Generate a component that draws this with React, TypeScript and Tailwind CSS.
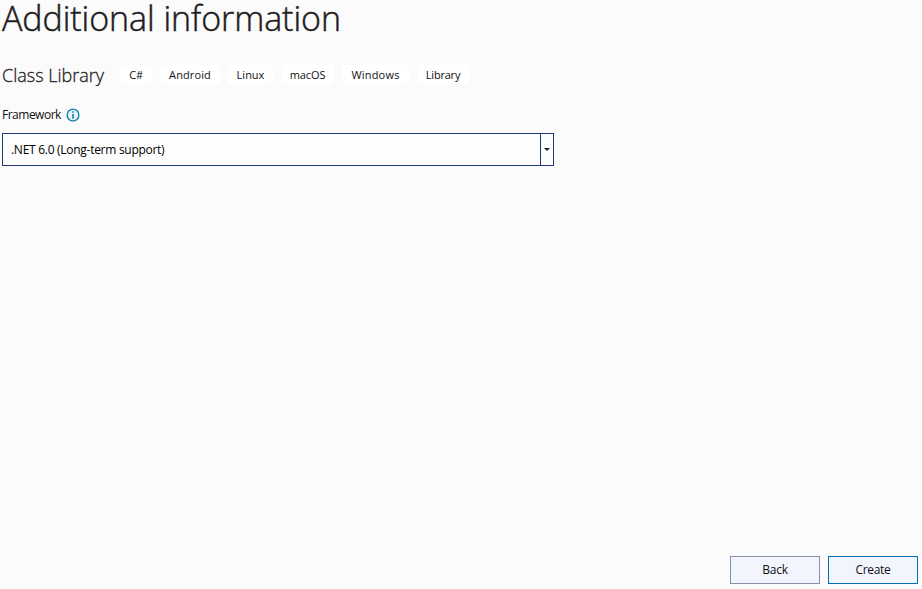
const tags = [
  { label: "C#", size: "w-8", text: "tracking-[-0.2px]" },
  { label: "Android", size: "w-[60px]", text: "tracking-[0.1px]" },
  { label: "Linux", size: "w-[45px]", text: "" },
  { label: "macOS", size: "w-[53px]", text: "tracking-[-0.1px]" },
  { label: "Windows", size: "w-[67px]", text: "tracking-[0.2px]" },
  { label: "Library", size: "w-[52px]", text: "tracking-[-0.2px]" },
];

function InfoIcon() {
  return (
    <svg className="h-[14px] w-[14px]" viewBox="0 0 14 14" fill="none">
      <circle cx="7" cy="7" r="5.9" fill="#e3f3f8" stroke="#1683a8" strokeWidth="1.4" />
      <path d="M6.2 3.3h1.6v1.5H6.2zM6.2 6h1.6v4.8H6.2z" fill="#1683a8" />
    </svg>
  );
}

export default function App() {
  return (
    <main className="flex h-[589px] w-[922px] flex-col bg-[#fbfbfb] font-['Open_Sans','Noto_Sans',sans-serif] text-[11px] text-[#111111]">
      <h1 className="h-[65px] pl-[2px] text-[34px] leading-[36px] font-light tracking-[-0.07px] whitespace-nowrap text-[#1e1e1e] [-webkit-text-stroke:0.5px_#1e1e1e]">
        Additional information
      </h1>
      <div className="flex h-[19px] items-center pl-[2px]">
        <h2 className="w-[118px] pt-[2px] text-[18px] leading-[19px] font-light whitespace-nowrap text-[#1e1e1e] [-webkit-text-stroke:0.3px_#1e1e1e]">Class Library</h2>
        <div className="flex gap-2">
          {tags.map((tag) => (
            <span
              key={tag.label}
              className={`flex h-[19px] items-center justify-center rounded-[3px] bg-white pt-[2px] whitespace-nowrap ${tag.size} ${tag.text}`}
            >
              {tag.label}
            </span>
          ))}
        </div>
      </div>
      <div className="mt-6 flex h-[14px] items-center pl-[2px]">
        <label className="w-16 text-[12px] leading-[14px] tracking-[-0.5px] whitespace-nowrap">Framework</label>
        <InfoIcon />
      </div>
      <button className="mt-[11px] ml-[2px] flex h-[33px] w-[552px] items-stretch border border-[#1f3a77] bg-[#fdfdfd] text-left text-[12px] text-black">
        <span className="flex flex-1 items-center pl-2 tracking-[-0.28px] whitespace-nowrap">.NET 6.0 (Long-term support)</span>
        <span className="flex w-[13px] items-center justify-center border-l border-[#1f3a77]">
          <svg className="h-[3px] w-[6px]" viewBox="0 0 6 3">
            <path d="M0 0h6L3 3z" fill="#1e1e1e" />
          </svg>
        </span>
      </button>
      <footer className="mt-auto mb-[5px] flex justify-end gap-2 pr-1 text-[12px] tracking-[-0.3px]">
        <button className="h-7 w-[90px] border border-[#8591a5] bg-[#f2f5fd]">Back</button>
        <button className="h-7 w-[90px] border border-[#0070b8] bg-[#f2f5fd]">Create</button>
      </footer>
    </main>
  );
}
